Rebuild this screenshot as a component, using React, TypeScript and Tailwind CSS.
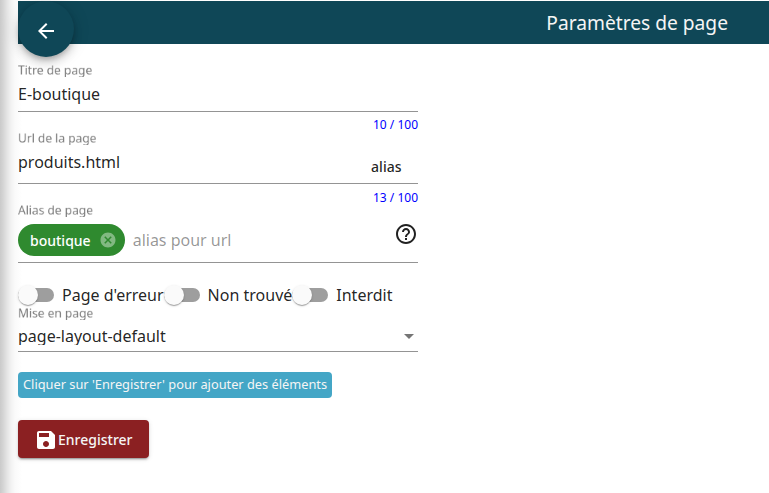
import type { ReactNode } from "react";

function FieldLabel({ children }: { children: ReactNode }) {
  return (
    <div className="h-[13px] overflow-hidden">
      <div className="w-max origin-top-left scale-75 text-[16px] leading-[17px] text-black/54 will-change-transform">
        {children}
      </div>
    </div>
  );
}

function Counter({ children }: { children: ReactNode }) {
  return <div className="h-[17px] text-right text-[12px] leading-[17px] text-[#0000ff]">{children}</div>;
}

function Toggle({ label }: { label: string }) {
  return (
    <label className="flex h-6 items-center">
      <span className="flex h-[14px] w-9 shrink-0 items-center rounded-full bg-[#9e9e9e]">
        <span className="size-5 shrink-0 rounded-full bg-[#fafafa] shadow-[0_2px_1px_-1px_rgba(0,0,0,0.2),0_1px_1px_0_rgba(0,0,0,0.14),0_1px_3px_0_rgba(0,0,0,0.12)]" />
      </span>
      <span className="ml-2 whitespace-nowrap text-[16px] leading-6">{label}</span>
    </label>
  );
}

export default function App() {
  return (
    <div className="relative h-[493px] w-[769px] overflow-hidden bg-white pl-[18px] pt-px font-['Noto_Sans',sans-serif] text-black/87">
      <div className="pointer-events-none absolute inset-y-0 left-0 w-[22px] bg-[linear-gradient(to_right,#cacaca_0px,#d4d4d4_3px,#e4e4e4_7px,#f2f2f2_11px,#fafafa_15px,#ffffff_22px)]" />

      <header className="relative flex h-[43px] items-start justify-between bg-[#0f4757] pr-[41px]">
        <button className="flex size-14 shrink-0 items-center justify-center rounded-full bg-[#0f4757] shadow-[0_3px_5px_-1px_rgba(0,0,0,0.2),0_6px_10px_0_rgba(0,0,0,0.14),0_1px_18px_0_rgba(0,0,0,0.12)]">
          <svg viewBox="0 0 24 24" className="mt-1 size-6 fill-white">
            <path d="M20 11H7.83l5.59-5.59L12 4l-8 8 8 8 1.41-1.41L7.83 13H20v-2z" />
          </svg>
        </button>
        <h1 className="text-[19.2px] leading-[43px] text-[#f5f5f5]">Paramètres de page</h1>
      </header>

      <main className="relative w-[400px] pt-5">
        <section className="h-[68px]">
          <FieldLabel>Titre de page</FieldLabel>
          <div className="mt-[5px] h-[29px] text-[16px] leading-6">E-boutique</div>
          <div className="h-px bg-[#949494]" />
          <div className="pt-1">
            <Counter>10 / 100</Counter>
          </div>
        </section>

        <section className="h-[72px]">
          <FieldLabel>Url de la page</FieldLabel>
          <div className="mt-[5px] flex h-[33px] justify-between pr-[16.5px]">
            <span className="text-[16px] leading-6">produits.html</span>
            <span className="pt-[5px] text-[14px] font-medium leading-6">alias</span>
          </div>
          <div className="h-px bg-[#949494]" />
          <div className="pt-[5px]">
            <Counter>13 / 100</Counter>
          </div>
        </section>

        <section className="h-[59px]">
          <FieldLabel>Alias de page</FieldLabel>
          <div className="mt-[7px] flex h-[38px]">
            <span className="flex h-8 items-center rounded-full bg-[#2f8a2f] pl-3 pr-2 text-[14px] font-medium leading-5 text-white">
              <span className="pt-[2px]">boutique</span>
              <svg viewBox="0 0 24 24" className="ml-2 size-[18px] fill-white opacity-40">
                <path d="M12 2C6.47 2 2 6.47 2 12s4.470 10 10 10 10-4.470 10-10S17.530 2 12 2zm5 13.590L15.590 17 12 13.410 8.410 17 7 15.590 10.590 12 7 8.410 8.410 7 12 10.590 15.590 7 17 8.410 13.410 12 17 15.590z" />
              </svg>
            </span>
            <span className="ml-2 text-[16px] leading-8 text-black/42">alias pour url</span>
            <svg viewBox="0 0 24 24" className="ml-auto -mt-[2px] size-6 fill-black/87">
              <path d="M11 18h2v-2h-2v2zm1-16C6.480 2 2 6.480 2 12s4.480 10 10 10 10-4.480 10-10S17.520 2 12 2zm0 18c-4.410 0-8-3.590-8-8s3.590-8 8-8 8 3.590 8 8-3.590 8-8 8zm0-14c-2.210 0-4 1.790-4 4h2c0-1.100.9-2 2-2s2 .9 2 2c0 2-3 1.750-3 5h2c0-2.250 3-2.500 3-5 0-2.210-1.790-4-4-4z" />
            </svg>
          </div>
          <div className="h-px bg-[#949494]" />
        </section>

        <div className="mt-5 flex">
          <Toggle label="Page d'erreur" />
          <Toggle label="Non trouvé" />
          <Toggle label="Interdit" />
        </div>

        <section>
          <FieldLabel>Mise en page</FieldLabel>
          <div className="mt-1 flex h-[27px] items-start justify-between pr-1">
            <span className="h-[21px] overflow-hidden text-[16px] leading-6">page-layout-default</span>
            <span className="mt-[10px] border-x-[5px] border-t-[5px] border-x-transparent border-t-black/54" />
          </div>
          <div className="h-px bg-[#949494]" />
        </section>

        <div className="mt-5 h-[26px] w-[314px] whitespace-nowrap rounded-[4px] bg-[#44a6c6] pl-[5px] text-[12.8px] leading-[24px] text-[#f5f5f5]">
          Cliquer sur 'Enregistrer' pour ajouter des éléments
        </div>

        <button className="mt-[22px] flex h-[38px] w-[131px] items-center rounded-[4px] bg-[#8b2022] pl-4 text-[14px] font-medium text-[#f5f5f5] shadow-[0_3px_1px_-2px_rgba(0,0,0,0.2),0_2px_2px_0_rgba(0,0,0,0.14),0_1px_5px_0_rgba(0,0,0,0.12)]">
          <svg viewBox="0 0 24 24" className="mt-0.5 size-6 fill-white">
            <path d="M17 3H5c-1.110 0-2 .9-2 2v14c0 1.100.890 2 2 2h14c1.100 0 2-.9 2-2V7l-4-4zm-5 16c-1.660 0-3-1.340-3-3s1.340-3 3-3 3 1.340 3 3-1.340 3-3 3zm3-10H5V5h10v4z" />
          </svg>
          <span>Enregistrer</span>
        </button>
      </main>
    </div>
  );
}
